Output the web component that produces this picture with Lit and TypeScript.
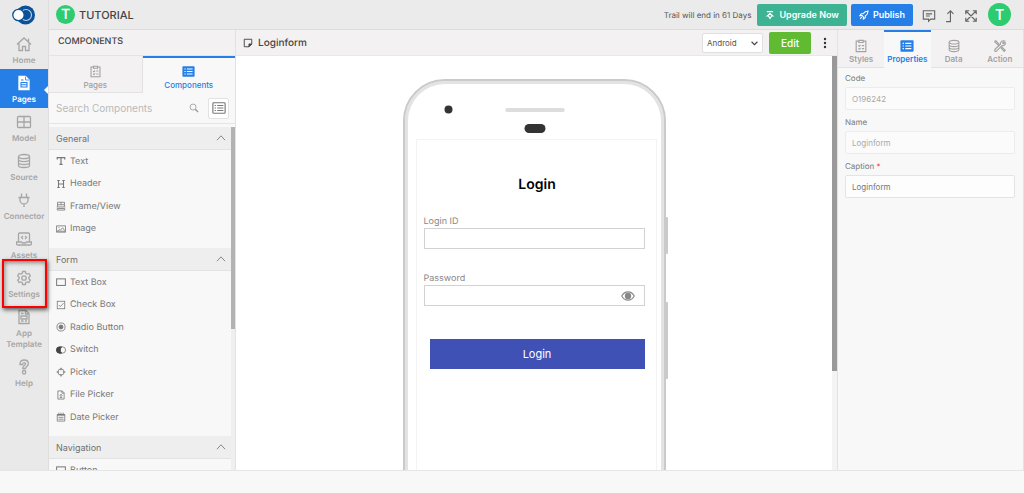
import { LitElement, html, css, svg, nothing } from "lit";
import { customElement, state } from "lit/decorators.js";
import { classMap } from "lit/directives/class-map.js";

const glyphs: Record<string, unknown> = {
  home: svg`<path d="M1 8.500 8 2l7 6.500M3 7.500v7h3.500v-4h3v4H13v-7M12.500 2.500v3"/>`,
  page: svg`<path d="M3 1.500h6.500L13 5v9.500H3z" fill="#fff" stroke="#fff"/><path d="M5 5h2.500M5 7.500h6v4.500H5zM5 9.700h6" stroke="#267fe6" stroke-width="1.100"/><path d="M9.500 1.500V5H13" stroke="#267fe6" stroke-width=".8"/>`,
  model: svg`<rect x="1.500" y="2.500" width="13" height="11" rx="1"/><path d="M8 2.500v11M1.500 8h13"/>`,
  db: svg`<ellipse cx="8" cy="3.600" rx="5.500" ry="2.100"/><path d="M2.500 3.600v8.800c0 2.800 11 2.800 11 0V3.600M2.500 6.600c0 2.800 11 2.800 11 0M2.500 9.500c0 2.800 11 2.800 11 0"/>`,
  plug: svg`<path d="M5.500 1.500V5M10.500 1.500V5M2.500 5.500h11M4 5.500v2.500a4 4 0 0 0 8 0V5.500M8 12v3"/>`,
  laptop: svg`<path d="M2.500 11V3q0-1 1-1h9q1 0 1 1v8M.5 11h5l1 1h3l1-1h5v1.500q0 1.500-1.500 1.500H2Q.5 14 .5 12.500zM7 5 5.500 6.500 7 8M9 5l1.500 1.500L9 8"/>`,
  gear: svg`<path d="M6.600 1.500h2.800l.4 1.900 1.300.7 1.800-.6 1.400 2.400L12.900 7.200v1.600l1.400 1.300-1.400 2.400-1.800-.6-1.300.7-.4 1.900H6.600l-.4-1.900-1.300-.7-1.800.6-1.400-2.400 1.400-1.300V7.200L1.700 5.900l1.400-2.400 1.800.6 1.300-.7z"/><circle cx="8" cy="8" r="2.200"/>`,
  template: svg`<path d="M3 1.500h7L13 4.500v10H3zM9.500 1.500V5H13M5 4.500h2.500M5 7h6v3H5zM5 12h2.500M9 12h2"/>`,
  help: svg`<path d="M4 5.500V4.300C4.400 2.200 6 1 8.100 1c2.500 0 4.200 1.500 4.200 3.700 0 2.600-2.800 2.700-2.800 4.800H6.700c0-3.300 2.800-3.200 2.800-4.700 0-1.500-2.600-1.600-2.800.7z"/><rect x="6.500" y="11.500" width="3.200" height="3.500" rx="1.500"/>`,
  clipboard: svg`<path d="M5.500 2.500h-3v12h11v-12h-3M5.500 1.500h5v2.500h-5zM5 7.500l1 .8L7.500 6.800M9 7.500h2.500M5 11l1 .8 1.500-1.500M9 11h2.500"/>`,
  list: svg`<rect x=".5" y="1.500" width="15" height="13" rx="1" fill="currentColor" stroke="none"/><path d="M3 5h1.500M6 5h7M3 8h1.500M6 8h7M3 11h1.500M6 11h7" stroke="#fff"/>`,
  listline: svg`<rect x="1" y="2" width="14" height="12" rx="1"/><path d="M3 5.200h1.500M6 5.200h7M3 8h1.500M6 8h7M3 10.800h1.500M6 10.800h7"/>`,
  search: svg`<circle cx="6.500" cy="6.500" r="4.800"/><path d="m10 10 4.500 4.500" stroke-width="2.200"/>`,
  chevUp: svg`<path d="m1.500 11.500 6.500-7 6.500 7"/>`,
  text: svg`<path d="M2 5.500V2.500h12v3M8 2.500v11M5.500 13.500h5" stroke-width="1.900"/>`,
  header: svg`<path d="M4 2.500v11M12 2.500v11M4 8h8M2 2.500h4M10 2.500h4M2 13.500h4M10 13.500h4" stroke-width="1.700"/>`,
  frame: svg`<path d="M2.500 9V2h11v7M2.500 6h11M8 2v4M1 9.500h14M2 12h12v2.500H2z"/>`,
  image: svg`<rect x="1" y="3" width="14" height="10"/><path d="m2.500 11.500 3-3 1.500 1.500 3.500-4 3.500 4.500M4 5.500h1.500M1 11.500h14"/>`,
  box: svg`<rect x="1" y="3" width="14" height="10.500" stroke-width="1.600"/>`,
  check: svg`<rect x="2" y="2" width="12" height="12"/><path d="m4.500 8 2.500 2.500 5-5.500"/>`,
  radio: svg`<circle cx="8" cy="8" r="6.500"/><circle cx="8" cy="8" r="3.200" fill="currentColor"/>`,
  switch: svg`<rect x=".8" y="3" width="14.500" height="10" rx="5"/><path d="M9 3H5.800a5 5 0 0 0 0 10H9a7 7 0 0 1 0-10z" fill="#444" stroke="#444"/>`,
  picker: svg`<circle cx="8" cy="8" r="5"/><path d="M8 1v4M8 11v4M1 8h4M11 8h4" stroke-width="1.800"/>`,
  file: svg`<path d="M3 1.500h7l3 3v10H3zM9.500 1.500V5H13M8 12V7M6 9l2-2 2 2M6 12h4"/>`,
  calendar: svg`<path d="M2 4h12v10.500H2zM4.500 1v3M8 1v3M11.500 1v3M4 8.500h8M4 11.500h8"/><path d="M2 4.500h12" stroke-width="2.600"/>`,
  comment: svg`<path d="M1.500 2h13v9.500H10L7.500 14v-2.500h-6zM4.500 5.500h7M4.500 8h4.500"/>`,
  share: svg`<path d="M3.500 14.500h5V2M5 5.500 8.500 2 12 5.500"/>`,
  expand: svg`<path d="M2 6V2h4M10 2h4v4M14 10v4h-4M6 14H2v-4M2 2l12 12M14 2 2 14"/>`,
  upgrade: svg`<path d="M3 2.500h10M8 5.500 3.500 9.500h2.300v.5L8 13.500l2.200-3.500v-.5h2.300z" stroke-width="1.800"/>`,
  rocket: svg`<path d="M14.500 1.500c-4 0-6 1.500-8 4.500H3.500L1.500 9H5l2 2v3.500l3-2V9.500c3-2 4.500-4 4.500-8zM4.500 11.500 2 14" stroke-width="1.700"/>`,
  tools: svg`<path d="m2 2 1.800.4L5 4l3 3M2 2l.4 1.800L4 5l3 3M9.500 8.800 14 13l-1.200 1.200L8.800 9.800"/><path d="M13.200 2.200 11 4.300l.7 1 2.300-1.500c.7 2.300-1.300 4.400-3.800 3.700L4 13.800q-1 .8-1.800 0t0-1.800L8.600 5.700C8 3.300 10.500 1.300 13.200 2.200z"/>`,
  note: svg`<path d="M2 2h12v7.500L9.500 14H2z" stroke-width="1.500"/><path d="M14 9.500H9.500V14z" fill="currentColor"/>`,
  eye: svg`<path d="M.8 8c3.500-6.300 10.900-6.300 14.400 0-3.500 6.300-10.900 6.300-14.400 0z"/><circle cx="8" cy="8" r="3" fill="currentColor"/>`,
};

const icon = (name: string, size = "m") =>
  html`<svg class="icon ${size}" viewBox="0 0 16 16" aria-hidden="true">${glyphs[name]}</svg>`;

const NAV = [
  ["home", "Home"], ["page", "Pages"], ["model", "Model"], ["db", "Source"], ["plug", "Connector"],
  ["laptop", "Assets"], ["gear", "Settings"], ["template", "App Template"], ["help", "Help"],
];

const GROUPS: { name: string; items: string[][] }[] = [
  { name: "General", items: [["text", "Text"], ["header", "Header"], ["frame", "Frame/View"], ["image", "Image"]] },
  { name: "Form", items: [["box", "Text Box"], ["check", "Check Box"], ["radio", "Radio Button"], ["switch", "Switch"], ["picker", "Picker"], ["file", "File Picker"], ["calendar", "Date Picker"]] },
  { name: "Navigation", items: [["box", "Button"]] },
];

const shared = css`
  :host, * { box-sizing: border-box; }
  button, input, select { font: inherit; color: inherit; margin: 0; }
  button { border: 0; background: none; padding: 0; cursor: pointer; }
  h1, h2, h3 { margin: 0; font-weight: 500; }
  .icon { display: block; flex: none; fill: none; stroke: currentColor; stroke-width: 1.3; }
  .s { width: 10px; height: 10px; }
  .m { width: 14px; height: 14px; }
  .l { width: 16px; height: 16px; }
`;

@customElement("side-nav")
export class SideNav extends LitElement {
  @state() private active = "Pages";
  static styles = [shared, css`
    :host { display: block; width: 49px; flex: none; background: #e9e9e9; border-right: 1px solid #dedede; color: #a6a6a6; }
    .logo { display: flex; height: 30px; justify-content: center; align-items: center; }
    .logo svg { width: 24px; height: 20px; }
    .item { position: relative; display: flex; flex-direction: column; align-items: center; gap: 3px; width: 100%; min-height: 39px; padding: 6px 0 3px; font-size: 8px; line-height: 11px; font-weight: 600; text-decoration: none; text-align: center; color: inherit; }
    .active { background: #267fe6; color: #fff; }
    .active::after { content: ""; position: absolute; right: 0; top: 17px; border: 4px solid transparent; border-right-color: #fff; border-left: 0; }
    .marked::before { content: ""; position: absolute; inset: -5px 1px -5px 2px; border: 2px solid #f00; box-shadow: 1px 2px 4px #0009, inset 1px 2px 4px #0006; z-index: 1; }
    .label { padding: 0 6px; }
  `];
  render() {
    return html`
      <div class="logo"><svg viewBox="0 0 24 20" aria-label="Home"><circle cx="13.500" cy="10" r="9.500" fill="#0b5199"/><circle cx="14" cy="10" r="5.500" fill="none" stroke="#b9cfe6" stroke-width="1.200"/><circle cx="6.500" cy="10" r="5.700" fill="#fff" stroke="#0b5199" stroke-width="1.300"/></svg></div>
      <nav>${NAV.map(([g, label]) => html`<a href="#${g}" class=${classMap({ item: true, active: label === this.active, marked: label === "Settings" })}
        @click=${() => (this.active = label)}>${icon(g, "l")}<span class="label">${label}</span></a>`)}</nav>`;
  }
}

@customElement("top-bar")
export class TopBar extends LitElement {
  static styles = [shared, css`
    :host { display: flex; align-items: center; height: 30px; flex: none; padding: 0 13px 0 7px; background: #ebebeb; border-bottom: 1px solid #dcdcdc; color: #666; }
    .avatar { display: grid; place-items: center; border-radius: 50%; background: #2dcc70; color: #fff; font-weight: 600; }
    .small { width: 19px; height: 19px; font-size: 14px; }
    .big { width: 23px; height: 23px; font-size: 14px; }
    h1 { flex: 1; margin-left: 4px; font-size: 11px; line-height: 16px; color: #444; }
    .trial { font-size: 8px; margin-right: 6px; color: #555; }
    .cta { display: flex; align-items: center; justify-content: center; gap: 4px; height: 22px; border-radius: 2px; padding: 0 8px; margin-right: 4px; color: #fff; font-size: 9px; font-weight: 600; }
    .green { background: #3eb393; }
    .blue { background: #267fe6; }
    .tools { display: flex; gap: 7px; margin: 2px 10px 0 5px; }
  `];
  render() {
    return html`
      <span class="avatar small">T</span><h1>TUTORIAL</h1>
      <span class="trial">Trail will end in 61 Days</span>
      <button class="cta green">${icon("upgrade", "s")}Upgrade Now</button>
      <button class="cta blue">${icon("rocket", "s")}Publish</button>
      <div class="tools">
        <button aria-label="Comments">${icon("comment")}</button>
        <button aria-label="Share">${icon("share")}</button>
        <button aria-label="Full screen">${icon("expand")}</button>
      </div>
      <button class="avatar big" aria-label="Account">T</button>`;
  }
}

@customElement("component-panel")
export class ComponentPanel extends LitElement {
  static styles = [shared, css`
    :host { display: flex; flex-direction: column; width: 187px; flex: none; min-height: 0; background: #f8f8f8; border-right: 1px solid #e2e2e2; color: #777; }
    h2 { height: 26px; flex: none; padding: 0 9px; line-height: 24px; font-size: 9px; background: #f3f1f2; border-bottom: 1px solid #e4e4e4; color: #444; }
    .tabs { display: flex; flex: none; height: 37px; }
    .tab { flex: 1; display: flex; flex-direction: column; align-items: center; gap: 2px; padding-top: 9px; font-size: 8px; line-height: 11px; font-weight: 500; color: #a0a0a0; background: #f3f1f2; border-bottom: 1px solid #e2e2e2; border-right: 1px solid #e2e2e2; }
    .on { padding-top: 7px; color: #267fe6; background: #f8f8f8; border-bottom: 0; border-right: 0; border-top: 2px solid #267fe6; }
    .tab .m { width: 13px; height: 13px; }
    .search { display: flex; align-items: center; flex: none; height: 31px; padding: 0 6px 0 7px; border-bottom: 1px solid #e4e4e4; color: #999; }
    .search input { flex: 1; min-width: 0; border: 0; outline: 0; padding: 0; background: none; font-size: 10px; color: #777; }
    .search input::placeholder { color: #b8b8b8; opacity: 1; }
    .view { display: grid; place-items: center; width: 21px; height: 21px; margin-left: 9px; background: #fff; border: 1px solid #e2e2e2; border-radius: 2px; color: #777; }
    .body { display: flex; flex: 1; min-height: 0; margin-top: 3px; }
    .groups { flex: 1; overflow: hidden; }
    .track { width: 4px; background: #efefef; }
    .thumb { height: 59%; background: #b3b3b3; }
    .group { display: flex; justify-content: space-between; align-items: center; width: 100%; height: 23px; padding: 0 5px 0 7px; background: #eee; border-bottom: 1px solid #e2e2e2; font-size: 9px; color: #707070; }
    ul { list-style: none; margin: 0; padding: 0 8px 8px 7px; }
    li { display: flex; align-items: center; gap: 4px; height: 22px; font-size: 9px; }
    li:nth-child(even) { height: 23px; }
  `];
  render() {
    return html`
      <h2>COMPONENTS</h2>
      <div class="tabs"><button class="tab">${icon("clipboard")}Pages</button><button class="tab on">${icon("list")}Components</button></div>
      <div class="search"><input type="search" aria-label="Search Components" placeholder="Search Components" />${icon("search", "s")}<button class="view" aria-label="List view">${icon("listline")}</button></div>
      <div class="body">
        <div class="groups">${GROUPS.map((g) => html`
          <button class="group">${g.name}${icon("chevUp", "s")}</button>
          <ul>${g.items.map(([i, t]) => html`<li>${icon(i, "s")}${t}</li>`)}</ul>`)}
        </div>
        <div class="track"><div class="thumb"></div></div>
      </div>`;
  }
}

@customElement("design-canvas")
export class DesignCanvas extends LitElement {
  static styles = [shared, css`
    :host { display: flex; flex-direction: column; flex: 1; min-width: 0; min-height: 0; background: #fff; color: #444; }
    header { display: flex; align-items: center; height: 26px; flex: none; padding: 0 5px 0 7px; background: #f3f1f2; border-bottom: 1px solid #e8e8e8; }
    h2 { flex: 1; margin-left: 5px; font-size: 10px; }
    .select { position: relative; }
    select { appearance: none; display: block; width: 61px; height: 20px; padding: 0 4px; border: 1px solid #e0e0e0; border-radius: 2px; background: #fff; font-size: 8px; color: #555; }
    .arrow { position: absolute; right: 5px; top: 7px; width: 7px; height: 7px; fill: none; stroke: #444; stroke-width: 2; pointer-events: none; }
    .edit { width: 42px; height: 22px; margin: 0 7px 0 6px; border-radius: 2px; background: #60bb33; color: #fff; font-size: 10px; font-weight: 500; }
    .more { width: 14px; height: 14px; }
    .more svg { display: block; width: 14px; height: 14px; fill: #333; }
    .body { display: flex; flex: 1; min-height: 0; overflow: hidden; }
    .stage { flex: 1; display: flex; justify-content: center; padding-top: 23px; overflow: hidden; }
    .track { width: 5px; background: #f4f4f4; }
    .thumb { height: 76%; background: #999; }
    .phone { position: relative; width: 263px; height: 520px; flex: none; padding: 15px 7px 0 9px; border: 2px solid #c8cacb; border-radius: 42px; box-shadow: inset 0 0 0 3px #e3e3e4; }
    .phone::before, .phone::after { content: ""; position: absolute; right: -4px; width: 2px; background: #c8cacb; border-radius: 0 1px 1px 0; }
    .phone::before { top: 136px; height: 37px; }
    .phone::after { top: 221px; height: 77px; }
    .sensors { display: block; width: 100%; height: 43px; }
    .screen { height: 420px; margin-left: 2px; padding: 36px 11px 0 7px; border: 1px solid #f3f3f3; }
    h3 { margin: 0 0 23px 6px; text-align: center; font-size: 14px; line-height: 17px; font-weight: 600; color: #000; }
    .field { display: block; margin-bottom: 24px; font-size: 9px; line-height: 12px; color: #888; }
    .box { display: flex; align-items: center; height: 21px; border: 1px solid #d2d2d2; padding-right: 9px; }
    .box input { flex: 1; min-width: 0; border: 0; outline: 0; padding: 0 4px; background: none; }
    .login { display: block; width: calc(100% - 6px); height: 30px; margin: 33px 0 0 6px; background: #3f51b5; color: #fff; font-size: 11px; }
  `];
  render() {
    return html`
      <header>${icon("note", "s")}<h2>Loginform</h2>
        <div class="select"><select aria-label="Platform"><option>Android</option><option>iOS</option></select><svg class="arrow" viewBox="0 0 12 12"><path d="m1 3 5 5 5-5"/></svg></div>
        <button class="edit">Edit</button>
        <button class="more" aria-label="More"><svg viewBox="0 0 14 14"><circle cx="7" cy="3" r="1.200"/><circle cx="7" cy="7" r="1.200"/><circle cx="7" cy="11" r="1.200"/></svg></button>
      </header>
      <div class="body">
        <div class="stage"><div class="phone">
          <svg class="sensors" viewBox="0 0 242 43"><circle cx="34" cy="13.500" r="4" fill="#333"/><rect x="91" y="12" width="59" height="4" rx="1.500" fill="#ddd"/><rect x="110" y="28" width="21" height="9" rx="4.500" fill="#333"/></svg>
          <form class="screen" @submit=${(e: Event) => e.preventDefault()}>
            <h3>Login</h3>
            <label class="field">Login ID<span class="box"><input /></span></label>
            <label class="field">Password<span class="box"><input type="password" />${icon("eye")}</span></label>
            <button class="login">Login</button>
          </form>
        </div></div>
        <div class="track"><div class="thumb"></div></div>
      </div>`;
  }
}

@customElement("property-panel")
export class PropertyPanel extends LitElement {
  static styles = [shared, css`
    :host { display: block; width: 187px; flex: none; background: #f8f8f8; border-left: 1px solid #e2e2e2; border-right: 1px solid #e2e2e2; color: #777; }
    .tabs { display: flex; height: 38px; }
    .tab { flex: 1; display: flex; flex-direction: column; align-items: center; gap: 1px; padding-top: 9px; font-size: 8px; line-height: 11px; font-weight: 600; color: #a3a3a3; background: #f3f1f2; border-bottom: 1px solid #e2e2e2; }
    .on { padding-top: 7px; color: #267fe6; background: #f8f8f8; border-bottom: 0; border-top: 2px solid #267fe6; }
    form { padding: 4px 8px 0 7px; }
    label { display: block; margin-bottom: 6px; font-size: 8px; line-height: 12px; }
    label input { display: block; width: 100%; height: 23px; margin-top: 3px; padding: 0 6px; border: 1px solid #e4e4e4; border-radius: 2px; background: #fdfdfd; color: #777; }
    label input:disabled { border-color: #ececec; background: #fbfbfb; color: #aaa; }
    .req { color: #f44; }
  `];
  render() {
    const tabs = [["clipboard", "Styles"], ["list", "Properties"], ["db", "Data"], ["tools", "Action"]];
    const fields: [string, string, boolean][] = [["Code", "O196242", false], ["Name", "Loginform", false], ["Caption", "Loginform", true]];
    return html`
      <div class="tabs">${tabs.map(([g, t]) => html`<button class=${classMap({ tab: true, on: t === "Properties" })}>${icon(g)}${t}</button>`)}</div>
      <form>${fields.map(([l, v, edit]) => html`<label>${l}${edit ? html` <span class="req">*</span>` : nothing}<input .value=${v} ?disabled=${!edit} /></label>`)}</form>`;
  }
}

@customElement("app-root")
export class AppRoot extends LitElement {
  static styles = css`
    :host { display: flex; flex-direction: column; height: 100vh; overflow: hidden; background: #f8f8f8; font-family: Inter, "Liberation Sans", sans-serif; text-rendering: geometricPrecision; }
    .app { display: flex; flex: 1; min-height: 0; }
    .main { display: flex; flex-direction: column; flex: 1; min-width: 0; }
    .work { display: flex; flex: 1; min-height: 0; }
    footer { height: 22px; flex: none; border-top: 1px solid #e6e6e6; background: #f8f8f8; }
  `;
  render() {
    return html`
      <div class="app"><side-nav></side-nav>
        <div class="main"><top-bar></top-bar>
          <div class="work"><component-panel></component-panel><design-canvas></design-canvas><property-panel></property-panel></div>
        </div>
      </div>
      <footer></footer>`;
  }
}
